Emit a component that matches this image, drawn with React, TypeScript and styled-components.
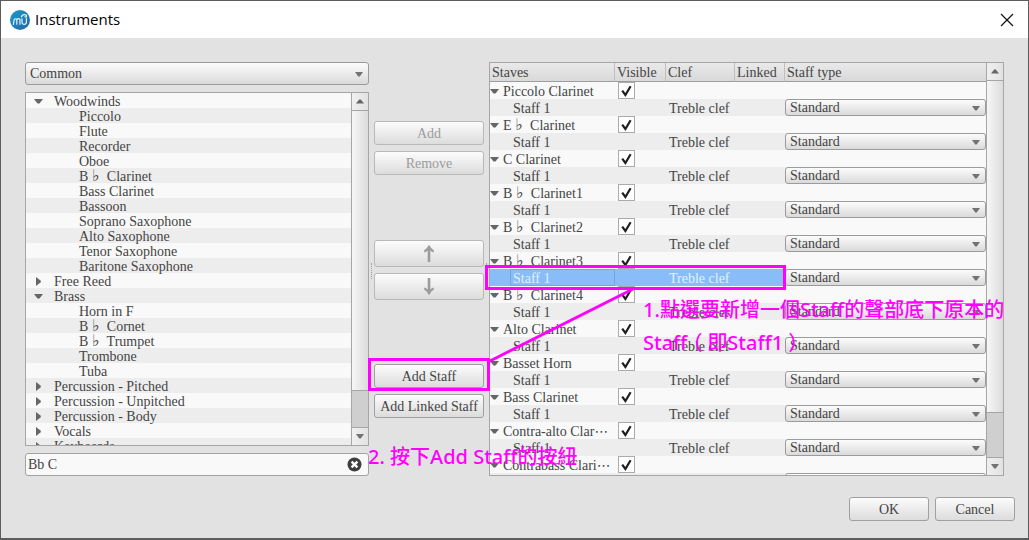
import React, { useState } from "react";
import styled, { createGlobalStyle } from "styled-components";

const GlobalStyle = createGlobalStyle`
  * { box-sizing: border-box; }
  body { margin: 0; background: #5a5a5a; }
  button, input, select { font: inherit; color: inherit; margin: 0; padding: 0; }
  ul { list-style: none; margin: 0; padding: 0; }
`;

const LINE = "#a6a6a6";
const MAGENTA = "#ff00ff";

const Window = styled.div`
  position: relative;
  display: flex;
  flex-direction: column;
  height: 100vh;
  min-width: 900px;
  border: 1px solid #5c5c5c;
  border-bottom-width: 2px;
  background: #e2e2e2;
  color: #444;
  font: 14px/15px "Liberation Serif", "Noto Sans CJK TC", serif;
`;

const TitleBar = styled.header`
  display: flex;
  align-items: center;
  gap: 5px;
  height: 37px;
  padding: 0 14px 0 9px;
  background: #fff;
  color: #000;
`;

const Title = styled.h1`
  flex: 1;
  margin: 0;
  padding-bottom: 2px;
  font: 400 15px/20px "Open Sans", sans-serif;
`;

const CloseButton = styled.button`
  display: flex;
  border: 0;
  background: none;
`;

const Body = styled.main`
  flex: 1;
  display: flex;
  gap: 5px;
  min-height: 0;
  padding: 24px 24px 0;
`;

const LeftPane = styled.section`
  flex: 344 1 0;
  display: flex;
  flex-direction: column;
  gap: 7px;
  min-width: 0;
`;

const SelectBox = styled.div<{ $h: number }>`
  position: relative;
  height: ${(p) => p.$h}px;

  select {
    appearance: none;
    display: block;
    width: 100%;
    height: 100%;
    padding: 0 4px;
    border: 1px solid #9b9b9b;
    border-radius: 3px;
    background: linear-gradient(#fcfcfc, #dadada);
    outline: none;
  }
  svg {
    position: absolute;
    right: 6px;
    top: 50%;
    margin-top: -2px;
    pointer-events: none;
  }
`;

const TreeBox = styled.div`
  flex: 1;
  display: flex;
  min-height: 0;
  border: 1px solid ${LINE};
  background: #f9f9f9;
`;

const Tree = styled.ul`
  flex: 1;
  overflow: hidden;
`;

const TreeRow = styled.li<{ $child: boolean }>`
  display: flex;
  align-items: center;
  height: 15px;
  padding-top: 2px;
  padding-left: ${(p) => (p.$child ? 53 : 8)}px;
  white-space: nowrap;
  &:nth-child(even) { background: #ededed; }
`;

const Twisty = styled.span`
  display: flex;
  width: 20px;
`;

const Flat = styled.span`
  display: inline-block;
  width: 15px;
  text-align: center;
  font: 16px/12px "DejaVu Sans", sans-serif;
`;

const Dots = styled.span`
  font: 14px/12px "DejaVu Sans", sans-serif;
`;

const Bar = styled.div`
  display: flex;
  flex-direction: column;
  width: 17px;
  border-left: 1px solid ${LINE};
  background: #cfcfcf;
`;

const BarButton = styled.button`
  display: flex;
  align-items: center;
  justify-content: center;
  height: 17px;
  border: 0;
  background: linear-gradient(90deg, #f0f0f0, #e2e2e2);
`;

const Thumb = styled.div<{ $grow: number }>`
  flex: ${(p) => p.$grow} 1 0;
  border: solid ${LINE};
  border-width: 1px 0;
  background: linear-gradient(90deg, #f6f6f6, #dcdcdc);
`;

const Groove = styled.div<{ $grow: number }>`
  flex: ${(p) => p.$grow} 1 0;
  border-bottom: 1px solid ${LINE};
`;

const SearchBox = styled.label`
  display: flex;
  align-items: center;
  height: 23px;
  padding: 0 6px 0 2px;
  border: 1px solid #a2a2a2;
  border-radius: 3px;
  background: #f9f9f9;

  input {
    flex: 1;
    min-width: 0;
    border: 0;
    outline: 0;
    background: none;
  }
  button {
    display: flex;
    border: 0;
    background: none;
  }
`;

const MiddlePane = styled.section`
  position: relative;
  display: flex;
  flex-direction: column;
  justify-content: space-between;
  width: 110px;
  padding: 59px 0 58px;
`;

const Grip = styled.span<{ $side: "left" | "right" }>`
  position: absolute;
  top: 50%;
  ${(p) => p.$side}: -3px;
  height: 16px;
  margin-top: -6px;
  border-left: 1px dotted #a0a0a0;
`;

const ButtonGroup = styled.div`
  display: flex;
  flex-direction: column;
  gap: 6px;
`;

const PushButton = styled.button<{ $h?: number; $w?: number }>`
  display: flex;
  align-items: center;
  justify-content: center;
  width: ${(p) => (p.$w ? p.$w + "px" : "100%")};
  height: ${(p) => p.$h ?? 24}px;
  border: 1px solid #a0a0a0;
  border-radius: 3px;
  background: linear-gradient(#fcfcfc, #dcdcdc);
  white-space: nowrap;
  &:disabled { border-color: #b8b8b8; color: #9c9c9c; }
`;

const StavesBox = styled.section`
  flex: 513 1 0;
  display: flex;
  min-width: 0;
  border: 1px solid ${LINE};
  background: #f9f9f9;
`;

const TableClip = styled.div`
  flex: 1;
  min-width: 0;
  overflow: hidden;
`;

const StavesTable = styled.table`
  width: 100%;
  table-layout: fixed;
  border-collapse: separate;
  border-spacing: 0;

  th {
    height: 19px;
    padding: 0 2px;
    border-right: 1px solid #c0c0c0;
    border-bottom: 1px solid #9d9d9d;
    background: linear-gradient(#e9e9e9, #d9d9d9);
    font-weight: 400;
    text-align: left;
  }
  th:last-child { border-right: 0; }
  td {
    height: 17px;
    padding: 0;
    white-space: nowrap;
  }
`;

const StaffRow = styled.tr<{ $selected?: boolean }>`
  background: #ededed;
  td:nth-child(-n + 4) {
    ${(p) => (p.$selected ? "background: #88bdf7; color: #e4f0fb;" : "")}
  }
`;

const NameCell = styled.div`
  display: flex;
  align-items: center;
  gap: 4px;
  height: 17px;
  padding-top: 2px;
`;

const StaffName = styled.div<{ $selected?: boolean }>`
  height: 17px;
  margin-left: 20px;
  padding: 0 2px;
  line-height: 17px;
  border: 1px solid ${(p) => (p.$selected ? "#76a5d8" : "transparent")};
`;

const ClefText = styled.div`
  padding: 2px 0 0 3px;
`;

const Check = styled.label`
  display: grid;
  width: 17px;
  height: 17px;
  margin-left: 3px;

  input, svg { grid-area: 1 / 1; }
  input {
    appearance: none;
    width: 17px;
    height: 17px;
    border: 1px solid #ababab;
    background: #fff;
  }
  svg { pointer-events: none; }
  input:not(:checked) + svg { visibility: hidden; }
`;

const Footer = styled.footer`
  display: flex;
  justify-content: flex-end;
  gap: 6px;
  padding: 21px 13px 17px;
`;

const Marks = styled.svg`
  position: absolute;
  left: 0;
  top: 0;
  pointer-events: none;
`;

const Note = styled.p<{ $x: number; $y: number }>`
  position: absolute;
  left: ${(p) => p.$x}px;
  top: ${(p) => p.$y}px;
  margin: 0;
  color: ${MAGENTA};
  font: 500 20px/33px "Noto Sans", "Noto Sans CJK TC", sans-serif;
  white-space: nowrap;
  pointer-events: none;
`;

const Paren = styled.span`
  padding: 0 5px;
  font-feature-settings: "halt";
`;

const Down = () => (
  <svg width="9" height="5" viewBox="0 0 9 5"><path d="M0 0h9L5.5 4.6h-2z" fill="#666" /></svg>
);
const Up = () => (
  <svg width="8" height="5" viewBox="0 0 8 5"><path d="M0 4.5h8L4.8 .5H3.2z" fill="#666" /></svg>
);
const ComboArrow = () => (
  <svg width="8" height="5" viewBox="0 0 8 5"><path d="M0 0h8L4.8 4.4H3.2z" fill="#737373" /></svg>
);
const Right = () => (
  <svg width="9" height="9" viewBox="0 0 9 9"><path d="M2 0v9L6.8 5.2V3.8z" fill="#666" /></svg>
);
const Arrow = ({ down }: { down?: boolean }) => (
  <svg width="12" height="17" viewBox="0 0 12 17">
    <path
      d={
        down
          ? "M4.7 0h2.6v11.6Q8.6 10.2 10.8 9.6V11.8Q7.8 13.2 6.7 16.4H5.3Q4.2 13.2 1.2 11.8V9.6Q3.4 10.2 4.7 11.6z"
          : "M4.7 17h2.6V5.4Q8.6 6.8 10.8 7.4V5.2Q7.8 3.8 6.7.6H5.3Q4.2 3.8 1.2 5.2V7.4Q3.4 6.8 4.7 5.4z"
      }
      fill="#9c9c9c"
    />
  </svg>
);

const Logo = () => (
  <svg width="20" height="20" viewBox="0 0 20 20">
    <defs>
      <linearGradient id="logo" x1="0" y1="0" x2="1" y2="1">
        <stop offset="0" stopColor="#1c9bc4" />
        <stop offset="1" stopColor="#2565ae" />
      </linearGradient>
    </defs>
    <circle cx="10" cy="10" r="10" fill="url(#logo)" />
    <g fill="none" stroke="#e4f2fa" strokeWidth="1.2" strokeLinecap="round">
      <path d="M3.4 14.4 4.2 9.6Q5.6 8 6.8 9.4V14.2M6.8 9.6Q8.6 7.8 10 9.6V14.2" />
      <path d="M12 8.8v3.4q.2 2.2 2.2 2.2t2.2-2.2V8.4M11.4 7q.6-2.4 2.8-2.4 2.4 0 2.4 1.8-.4 1-1.8.4" />
    </g>
  </svg>
);

const withFlat = (text: string) => (
  <span>
    {text.split(/([♭⋯])/).map((part, i) =>
      part === "♭" ? <Flat key={i}>♭</Flat> : part === "⋯" ? <Dots key={i}>⋯</Dots> : part
    )}
  </span>
);

function ScrollBar({ thumb, groove }: { thumb: number; groove: number }) {
  return (
    <Bar>
      <BarButton aria-label="Scroll up"><Up /></BarButton>
      <Thumb $grow={thumb} />
      <Groove $grow={groove} />
      <BarButton aria-label="Scroll down"><ComboArrow /></BarButton>
    </Bar>
  );
}

function Combo({ value, height, label }: { value: string; height: number; label: string }) {
  return (
    <SelectBox $h={height}>
      <select aria-label={label} defaultValue={value}><option>{value}</option></select>
      <ComboArrow />
    </SelectBox>
  );
}

type Group = { name: string; items?: string[] };

const groups: Group[] = [
  {
    name: "Woodwinds",
    items: [
      "Piccolo", "Flute", "Recorder", "Oboe", "B♭ Clarinet", "Bass Clarinet", "Bassoon",
      "Soprano Saxophone", "Alto Saxophone", "Tenor Saxophone", "Baritone Saxophone",
    ],
  },
  { name: "Free Reed" },
  { name: "Brass", items: ["Horn in F", "B♭ Cornet", "B♭ Trumpet", "Trombone", "Tuba"] },
  { name: "Percussion - Pitched" },
  { name: "Percussion - Unpitched" },
  { name: "Percussion - Body" },
  { name: "Vocals" },
  { name: "Keyboards" },
];

const staves = [
  "Piccolo Clarinet", "E♭ Clarinet", "C Clarinet", "B♭ Clarinet1", "B♭ Clarinet2", "B♭ Clarinet3",
  "B♭ Clarinet4", "Alto Clarinet", "Basset Horn", "Bass Clarinet", "Contra-alto Clar⋯", "Contrabass Clari⋯",
];

const SELECTED = 5;

export default function App() {
  const [query, setQuery] = useState("Bb C");
  return (
    <>
      <GlobalStyle />
      <Window>
        <TitleBar>
          <Logo />
          <Title>Instruments</Title>
          <CloseButton aria-label="Close">
            <svg width="14" height="14" viewBox="0 0 14 14"><path d="M1 1l12 12M13 1 1 13" stroke="#111" strokeWidth="1.2" /></svg>
          </CloseButton>
        </TitleBar>

        <Body>
          <LeftPane>
            <Combo value="Common" height={23} label="Genre" />
            <TreeBox>
              <Tree>
                {groups.map((g) => [
                  <TreeRow key={g.name} $child={false}>
                    <Twisty>{g.items ? <Down /> : <Right />}</Twisty>
                    {g.name}
                  </TreeRow>,
                  ...(g.items ?? []).map((item) => (
                    <TreeRow key={item} $child>{withFlat(item)}</TreeRow>
                  )),
                ])}
              </Tree>
              <ScrollBar thumb={283} groove={37} />
            </TreeBox>
            <SearchBox>
              <input aria-label="Search" value={query} onChange={(e) => setQuery(e.target.value)} />
              <button type="button" aria-label="Clear" onClick={() => setQuery("")}>
                <svg width="15" height="15" viewBox="0 0 15 15">
                  <circle cx="7.5" cy="7.5" r="7" fill="#3f3f3f" />
                  <path d="M4.6 4.6l5.8 5.8M10.4 4.6l-5.8 5.8" stroke="#fff" strokeWidth="2.4" />
                </svg>
              </button>
            </SearchBox>
          </LeftPane>

          <MiddlePane>
            <Grip $side="left" />
            <Grip $side="right" />
            <ButtonGroup>
              <PushButton disabled>Add</PushButton>
              <PushButton disabled>Remove</PushButton>
            </ButtonGroup>
            <ButtonGroup>
              <PushButton disabled $h={27} aria-label="Move up"><Arrow /></PushButton>
              <PushButton disabled $h={27} aria-label="Move down"><Arrow down /></PushButton>
            </ButtonGroup>
            <ButtonGroup>
              <PushButton>Add Staff</PushButton>
              <PushButton>Add Linked Staff</PushButton>
            </ButtonGroup>
          </MiddlePane>

          <StavesBox>
            <TableClip>
              <StavesTable>
                <colgroup>
                  <col style={{ width: 125 }} />
                  <col style={{ width: 51 }} />
                  <col style={{ width: 69 }} />
                  <col style={{ width: 50 }} />
                  <col />
                </colgroup>
                <thead>
                  <tr><th>Staves</th><th>Visible</th><th>Clef</th><th>Linked</th><th>Staff type</th></tr>
                </thead>
                <tbody>
                  {staves.map((name, i) => (
                    <React.Fragment key={name}>
                      <tr>
                        <td><NameCell><Down />{withFlat(name)}</NameCell></td>
                        <td>
                          <Check>
                            <input type="checkbox" defaultChecked aria-label={"Visible: " + name} />
                            <svg width="17" height="17" viewBox="0 0 17 17">
                              <path d="M4.2 8.6 7.4 13 12.6 4.2" fill="none" stroke="#1e1e1e" strokeWidth="2.2" />
                            </svg>
                          </Check>
                        </td>
                        <td /><td /><td />
                      </tr>
                      <StaffRow $selected={i === SELECTED}>
                        <td><StaffName $selected={i === SELECTED}>Staff 1</StaffName></td>
                        <td />
                        <td><ClefText>Treble clef</ClefText></td>
                        <td />
                        <td><Combo value="Standard" height={17} label={"Staff type: " + name} /></td>
                      </StaffRow>
                    </React.Fragment>
                  ))}
                </tbody>
              </StavesTable>
            </TableClip>
            <ScrollBar thumb={335} groove={44} />
          </StavesBox>
        </Body>

        <Footer>
          <PushButton $w={80}>OK</PushButton>
          <PushButton $w={80}>Cancel</PushButton>
        </Footer>

        <Marks width="1027" height="537" fill="none" stroke={MAGENTA} strokeWidth="3">
          <rect x="485.5" y="265.5" width="298" height="22" />
          <rect x="368.5" y="358.5" width="119" height="30" />
          <path d="M487 361 632 288" />
        </Marks>
        <Note $x={642} $y={292}>
          1.點選要新增一個Staff的聲部底下原本的<br />
          Staff<Paren>（</Paren>即Staff1<Paren>）</Paren>
        </Note>
        <Note $x={367} $y={439}>2. 按下Add Staff的按紐</Note>
      </Window>
    </>
  );
}
